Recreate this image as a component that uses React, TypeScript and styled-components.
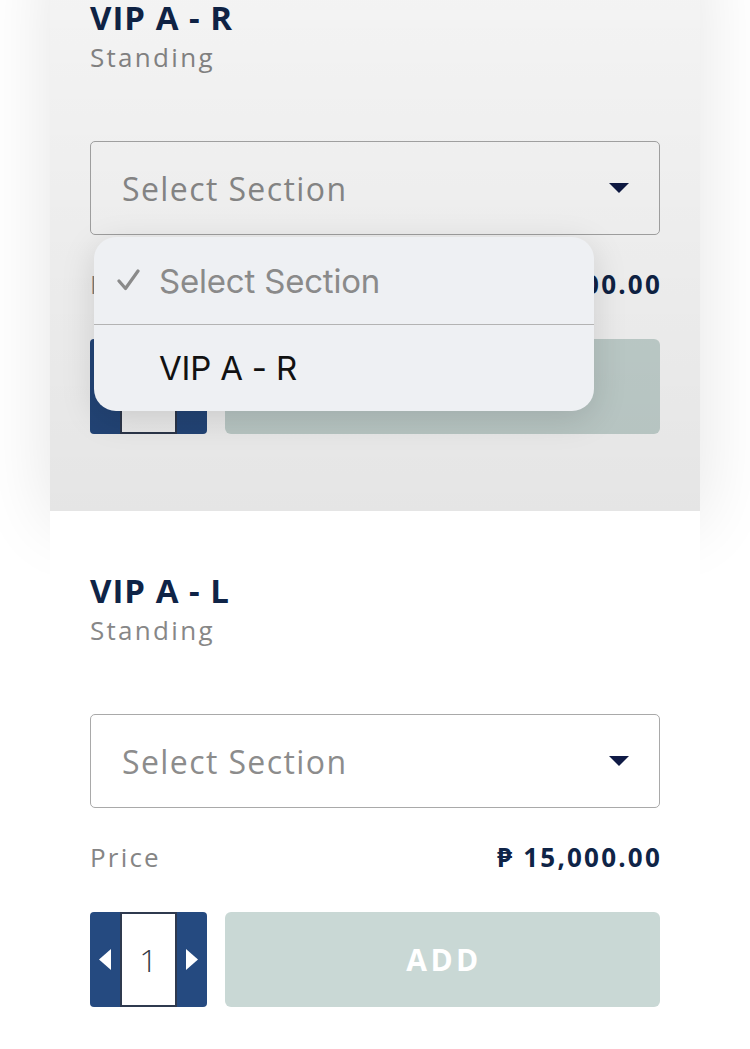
import React from 'react';
import styled, { createGlobalStyle } from 'styled-components';

const GlobalStyle = createGlobalStyle`
  html, body {
    margin: 0;
    padding: 0;
    background: #ffffff;
    overflow: hidden;
  }
  * { box-sizing: border-box; }
`;

const TITLE_FONT = `"Open Sans", "Noto Sans", sans-serif`;
const MENU_FONT = `Inter, Roboto, sans-serif`;

const tickets = [
  { name: 'VIP A - R', kind: 'Standing', price: '15,000.00', open: true },
  { name: 'VIP A - L', kind: 'Standing', price: '15,000.00', open: false },
];

const List = styled.div`
  margin-top: -62px;
  display: flex;
  flex-direction: column;
`;

const Card = styled.section<{ $focused?: boolean }>`
  position: relative;
  margin: 0 50px;
  padding: 60px 40px 77px;
  background: #ffffff;
  font-family: ${TITLE_FONT};
  ${(p) =>
    p.$focused &&
    `
    box-shadow: 0 10px 70px rgba(0, 0, 0, 0.11);
    &::after {
      content: '';
      position: absolute;
      inset: 0;
      z-index: 1;
      pointer-events: none;
      background: linear-gradient(180deg, rgba(0,0,0,0.04) 0%, rgba(0,0,0,0.1) 100%);
    }
  `}
`;

const Title = styled.h3`
  margin: 0;
  font-size: 33px;
  line-height: 36px;
  padding-top: 2px;
  font-weight: 700;
  color: #0f2447;
  letter-spacing: 1px;
`;

const Kind = styled.div`
  margin-top: 5px;
  font-size: 26px;
  line-height: 32px;
  color: #878787;
  letter-spacing: 2.3px;
`;

const SelectWrap = styled.div`
  position: relative;
  margin-top: 68px;
`;

const SelectBox = styled.div`
  height: 94px;
  border: 1.5px solid #a9a9a9;
  border-radius: 5px;
  background: #ffffff;
  display: flex;
  align-items: center;
  justify-content: space-between;
  padding: 0 30px 0 31px;
`;

const Placeholder = styled.span`
  font-size: 32px;
  font-weight: 400;
  color: #8c8c8c;
  letter-spacing: 1.4px;
`;

const Caret = styled.span`
  width: 0;
  height: 0;
  border-left: 10px solid transparent;
  border-right: 10px solid transparent;
  border-top: 10px solid #0f1a45;
`;

const Menu = styled.div`
  position: absolute;
  z-index: 2;
  top: 96px;
  left: 4px;
  width: 500px;
  border-radius: 22px;
  background: #eef0f3;
  box-shadow: 0 8px 34px rgba(0, 0, 0, 0.13);
  font-family: ${MENU_FONT};
  overflow: hidden;
`;

const MenuItem = styled.div<{ $selected?: boolean }>`
  height: 87px;
  display: flex;
  align-items: center;
  padding-left: 65px;
  position: relative;
  font-size: 33px;
  letter-spacing: -0.2px;
  color: ${(p) => (p.$selected ? '#8a8a8a' : '#111111')};
  & + & {
    border-top: 1.5px solid #b3b3b3;
  }
`;

const Check = styled.svg`
  position: absolute;
  left: 23px;
  top: 32px;
`;

const PriceRow = styled.div`
  margin-top: 33px;
  display: flex;
  justify-content: space-between;
  align-items: center;
  height: 32px;
`;

const PriceLabel = styled.span`
  font-size: 26px;
  color: #858585;
  letter-spacing: 2.2px;
`;

const PriceValue = styled.span`
  font-size: 26px;
  font-weight: 700;
  color: #0f2447;
  letter-spacing: 2.2px;
  margin-right: -2px;
`;

const Actions = styled.div`
  margin-top: 39px;
  display: flex;
  gap: 18px;
  height: 95px;
`;

const Stepper = styled.div`
  display: flex;
  width: 117px;
`;

const StepButton = styled.button<{ $side: 'left' | 'right' }>`
  width: 30px;
  border: none;
  padding: 0;
  background: #254a80;
  display: flex;
  align-items: center;
  justify-content: center;
  border-radius: ${(p) => (p.$side === 'left' ? '4px 0 0 4px' : '0 4px 4px 0')};
`;

const Qty = styled.div`
  flex: 1;
  background: #ffffff;
  border: 2px solid #2f3a4f;
  display: flex;
  align-items: center;
  justify-content: center;
  font-family: ${TITLE_FONT};
  font-size: 32px;
  font-weight: 300;
  color: #333a45;
`;

const AddButton = styled.button`
  flex: 1;
  border: none;
  border-radius: 6px;
  background: #c9d8d5;
  color: #ffffff;
  font-family: ${TITLE_FONT};
  font-size: 30px;
  font-weight: 700;
  letter-spacing: 3.5px;
  padding: 0 0 0 3px;
`;

const Arrow: React.FC<{ dir: 'left' | 'right' }> = ({ dir }) => (
  <svg width="12" height="21" viewBox="0 0 12 21">
    {dir === 'left' ? <path d="M12 0 L0 10.5 L12 21 Z" fill="#fff" /> : <path d="M0 0 L12 10.5 L0 21 Z" fill="#fff" />}
  </svg>
);

const TicketCard: React.FC<{ name: string; kind: string; price: string; open: boolean }> = ({ name, kind, price, open }) => (
  <Card $focused={open}>
    <Title>{name}</Title>
    <Kind>{kind}</Kind>
    <SelectWrap>
      <SelectBox>
        <Placeholder>Select Section</Placeholder>
        <Caret />
      </SelectBox>
      {open && (
        <Menu>
          <MenuItem $selected>
            <Check width="23" height="22" viewBox="0 0 23 22">
              <path d="M2 12 L8.5 19.5 L21 2" fill="none" stroke="#8a8a8a" strokeWidth="3.2" strokeLinecap="round" strokeLinejoin="round" />
            </Check>
            Select Section
          </MenuItem>
          <MenuItem>{name}</MenuItem>
        </Menu>
      )}
    </SelectWrap>
    <PriceRow>
      <PriceLabel>Price</PriceLabel>
      <PriceValue>₱ {price}</PriceValue>
    </PriceRow>
    <Actions>
      <Stepper>
        <StepButton $side="left"><Arrow dir="left" /></StepButton>
        <Qty>1</Qty>
        <StepButton $side="right"><Arrow dir="right" /></StepButton>
      </Stepper>
      <AddButton>ADD</AddButton>
    </Actions>
  </Card>
);

export default function App() {
  return (
    <>
      <GlobalStyle />
      <List>
        {tickets.map((t) => (
          <TicketCard key={t.name} {...t} />
        ))}
      </List>
    </>
  );
}
